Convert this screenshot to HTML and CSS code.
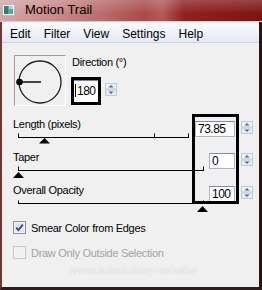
FILE: index.html
```html
<!DOCTYPE html>
<html lang="en">
<head>
    <meta charset="UTF-8">
    <title>Motion Trail</title>
    <link rel="stylesheet" href="styles.css">
</head>
<body>
    <div class="window">
        <div class="titlebar">
            <svg class="app-icon" width="13" height="12" viewBox="0 0 13 12">
                <rect x="0.5" y="0.5" width="12" height="11" fill="#f2f2f2" stroke="#b9b9b9"/>
                <rect x="2" y="2" width="9" height="8" fill="#5fa79a"/>
                <rect x="2" y="2" width="4" height="8" fill="#2f7f73"/>
                <rect x="7" y="2" width="4" height="3" fill="#a9d4e6"/>
            </svg>
            <span class="title">Motion Trail</span>
        </div>
        <div class="frame">
            <ul class="menubar">
                <li>Edit</li>
                <li>Filter</li>
                <li>View</li>
                <li>Settings</li>
                <li>Help</li>
            </ul>
            <div class="content">
                <div class="direction">
                    <div class="dial">
                        <svg width="50" height="49" viewBox="0 0 50 49">
                            <circle cx="25" cy="26" r="21" fill="none" stroke="#1c1c1c" stroke-width="1.3"/>
                            <line x1="4" y1="26" x2="26" y2="26" stroke="#1c1c1c" stroke-width="1.6"/>
                            <circle cx="4.5" cy="26" r="3.3" fill="#000"/>
                        </svg>
                    </div>
                    <div class="direction-field">
                        <label>Direction (°)</label>
                        <div class="field-line">
                            <div class="marked">
                                <div class="value boxed"><span class="caret"></span>180</div>
                            </div>
                            <svg class="spin spin-dir" width="12" height="13" viewBox="0 0 12 13">
                                <rect x="0.5" y="0.5" width="11" height="5.5" fill="#eef1f6" stroke="#c3cad6"/>
                                <rect x="0.5" y="7" width="11" height="5.5" fill="#e6eaf1" stroke="#c3cad6"/>
                                <path d="M3.5 4.5h5L6 2z" fill="#4a6a9a"/>
                                <path d="M3.5 8.5h5L6 11z" fill="#4a6a9a"/>
                            </svg>
                        </div>
                    </div>
                </div>

                <div class="param param-length">
                    <div class="param-left">
                        <label>Length (pixels)</label>
                        <svg class="track" width="196" height="14" viewBox="0 0 196 14">
                            <path d="M5.5 0.5v4M141.5 0.5v4M175.5 0.5v4M5 4.5h171" stroke="#000" fill="none"/>
                            <path d="M26 10.5L31.5 5L37 10.5z" fill="#000"/>
                        </svg>
                    </div>
                    <div class="value wide">73.85</div>
                    <svg class="spin spin-wide" width="12" height="13" viewBox="0 0 12 13">
                        <rect x="0.5" y="0.5" width="11" height="5.5" fill="#eef1f6" stroke="#c3cad6"/>
                        <rect x="0.5" y="7" width="11" height="5.5" fill="#e6eaf1" stroke="#c3cad6"/>
                        <path d="M3.5 4.5h5L6 2z" fill="#4a6a9a"/>
                        <path d="M3.5 8.5h5L6 11z" fill="#4a6a9a"/>
                    </svg>
                </div>

                <div class="param">
                    <div class="param-left">
                        <label>Taper</label>
                        <svg class="track" width="196" height="14" viewBox="0 0 196 14">
                            <path d="M5.5 0.5v4M190.5 0.5v4M5 4.5h186" stroke="#000" fill="none"/>
                            <path d="M0 12L5.5 6L11 12z" fill="#000"/>
                        </svg>
                    </div>
                    <div class="value narrow">0</div>
                    <svg class="spin" width="12" height="13" viewBox="0 0 12 13">
                        <rect x="0.5" y="0.5" width="11" height="5.5" fill="#eef1f6" stroke="#c3cad6"/>
                        <rect x="0.5" y="7" width="11" height="5.5" fill="#e6eaf1" stroke="#c3cad6"/>
                        <path d="M3.5 4.5h5L6 2z" fill="#4a6a9a"/>
                        <path d="M3.5 8.5h5L6 11z" fill="#4a6a9a"/>
                    </svg>
                </div>

                <div class="param">
                    <div class="param-left">
                        <label>Overall Opacity</label>
                        <svg class="track" width="196" height="14" viewBox="0 0 196 14">
                            <path d="M5.5 1.5v3M190.5 1.5v3M5 4.5h186" stroke="#000" fill="none"/>
                            <path d="M184 13L189.5 7L195 13z" fill="#000"/>
                        </svg>
                    </div>
                    <div class="value narrow">100</div>
                    <svg class="spin" width="12" height="13" viewBox="0 0 12 13">
                        <rect x="0.5" y="0.5" width="11" height="5.5" fill="#eef1f6" stroke="#c3cad6"/>
                        <rect x="0.5" y="7" width="11" height="5.5" fill="#e6eaf1" stroke="#c3cad6"/>
                        <path d="M3.5 4.5h5L6 2z" fill="#4a6a9a"/>
                        <path d="M3.5 8.5h5L6 11z" fill="#4a6a9a"/>
                    </svg>
                </div>

                <div class="highlight"></div>

                <div class="check">
                    <svg width="13" height="13" viewBox="0 0 13 13">
                        <rect x="0.5" y="0.5" width="12" height="12" fill="#f4f4f4" stroke="#8e8f8f"/>
                        <rect x="2" y="2" width="9" height="9" fill="#e3e6ee"/>
                        <path d="M3.2 6.6L5.4 9L9.8 3.6" fill="none" stroke="#2a4a96" stroke-width="1.8"/>
                    </svg>
                    <span>Smear Color from Edges</span>
                </div>
                <div class="check check-off">
                    <svg width="13" height="13" viewBox="0 0 13 13">
                        <rect x="0.5" y="0.5" width="12" height="12" fill="#f4f4f4" stroke="#c6c6c6"/>
                        <rect x="2" y="2" width="9" height="9" fill="#f1f1f1"/>
                    </svg>
                    <span>Draw Only Outside Selection</span>
                </div>
                <div class="watermark">www.tutorialsbyzadwiba</div>
            </div>
        </div>
    </div>
</body>
</html>
```

FILE: styles.css
```css
body {
    margin: 0;
    font-family: "Liberation Sans", Arial, sans-serif;
}
.window {
    width: 262px;
    height: 290px;
    display: flex;
    flex-direction: column;
    background: #f0f0f0;
}
.titlebar {
    height: 21px;
    border-bottom: 1px solid #e6c6c6;
    display: flex;
    align-items: center;
    background:
        linear-gradient(180deg, rgba(255, 255, 255, 0.2), rgba(255, 255, 255, 0) 65%),
        linear-gradient(90deg, #d6a6a6 0%, #c98b8b 20%, #b86a6a 40%, #a94b4b 55%, #b25a5a 62%, #8e2222 70%, #7c1414 100%);
}
.app-icon {
    margin: -2px 0 0 2px;
}
.title {
    margin: -2px 0 0 10px;
    font-size: 13px;
    color: #000;
}
.frame {
    flex: 1;
    display: flex;
    flex-direction: column;
    min-height: 0;
    border-left: 2px solid #7a3434;
    border-right: 3px solid #2e1414;
    border-bottom: 3px solid #2e1d1d;
}
.menubar {
    list-style: none;
    margin: 0;
    padding: 5px 0 1px 1.5px;
    display: flex;
    font-size: 12px;
    line-height: 14px;
    background: linear-gradient(#fbfcfe, #e4eaf4);
    border-bottom: 1px solid #c8d2e0;
}
.menubar li {
    padding: 0 6.5px;
}
.content {
    flex: 1;
    position: relative;
    padding: 12px 0 0 11px;
    font-size: 11px;
    letter-spacing: -0.3px;
    color: #000;
}
label {
    display: block;
    line-height: 13px;
}
.direction {
    display: flex;
}
.dial {
    width: 52px;
    height: 51px;
    box-sizing: border-box;
    margin-left: 1px;
    border: 1px solid;
    border-color: #9c9c9c #ffffff #ffffff #9c9c9c;
}
.dial svg {
    display: block;
}
.direction-field {
    margin: 1px 0 0 5px;
}
.direction-field label {
    padding-left: 1px;
}
.field-line {
    display: flex;
    align-items: flex-start;
    margin-top: 8px;
}
.marked {
    width: 30px;
    height: 28px;
    box-sizing: border-box;
    border: 3px solid #000;
}
.value {
    box-sizing: border-box;
    height: 16px;
    background: #fff;
    border: 1px solid #a9b6ca;
    border-top-color: #7b8ca6;
    padding-left: 2px;
    font-size: 12px;
    line-height: 14px;
    letter-spacing: -0.5px;
}
.value.boxed {
    height: 22px;
    padding: 3px 0 0 1px;
    border: none;
    border-top: 1px solid #6f88b4;
    display: flex;
    align-items: flex-start;
}
.caret {
    width: 1px;
    height: 13px;
    margin: 0 1px 0 0;
    background: #000;
}
.spin {
    display: block;
    margin-left: 6px;
    margin-top: 2px;
}
.spin-dir {
    margin-left: 4px;
    margin-top: 6px;
}
.spin-wide {
    margin-top: 3px;
}
.param {
    display: flex;
    align-items: flex-start;
    margin-top: 4px;
}
.param-length {
    margin-top: 12px;
}
.param-left {
    width: 182px;
    flex-shrink: 0;
}
.track {
    display: block;
    margin-top: 2px;
    overflow: visible;
}
.value.wide {
    width: 40px;
    margin-top: 3px;
}
.value.narrow {
    width: 26px;
    margin: 2px 0 0 14px;
}
.highlight {
    position: absolute;
    left: 190px;
    top: 71px;
    width: 47px;
    height: 90px;
    box-sizing: border-box;
    border: 3px solid #000;
}
.check {
    display: flex;
    align-items: center;
    gap: 5px;
    height: 13px;
    margin-top: 8px;
}
.check svg {
    display: block;
}
.check-off {
    margin-top: 12px;
    color: #a3a3a3;
}
.watermark {
    margin: 5px 0 0 57px;
    font-size: 11px;
    letter-spacing: 0.5px;
    color: #fdfdfd;
    text-shadow: 0 0 1px #a9a9a9;
}
```
